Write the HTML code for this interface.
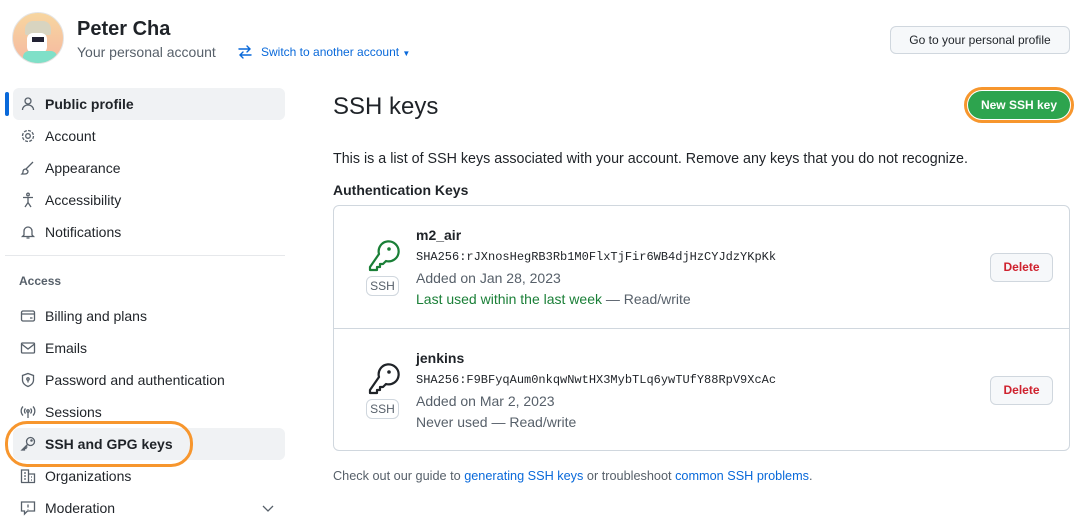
<!DOCTYPE html>
<html><head><meta charset="utf-8"><style>
*{margin:0;padding:0;box-sizing:border-box}
body{width:1083px;height:530px;overflow:hidden;background:#fff;font-family:"Liberation Sans",sans-serif;color:#1f2328;position:relative}
.a{position:absolute;white-space:nowrap}
.nav{position:absolute;left:45px;font-size:14px;color:#1f2328;line-height:20px}
.ic{position:absolute;left:20px;width:16px;height:16px}
.mono{font-family:"Liberation Mono",monospace;font-size:12px}
.btn{position:absolute;border:1px solid #d0d7de;border-radius:6px;background:#f6f8fa;font-size:12px;text-align:center}
.del{color:#cf222e;font-weight:600}
.badge{position:absolute;border:1px solid #d0d7de;border-radius:6px;font-size:12px;color:#57606a;width:33px;height:20px;line-height:18px;text-align:center}
</style></head><body>
<div class="a" style="left:12px;top:12px;width:52px;height:52px;border-radius:50%;background:linear-gradient(#f7d6a0,#f6b8a0);overflow:hidden;border:1px solid #e5e5e5">
<div style="position:absolute;left:12px;top:8px;width:26px;height:14px;background:#d8d4c0;border-radius:8px 8px 2px 2px"></div>
<div style="position:absolute;left:14px;top:20px;width:20px;height:20px;background:#fff;border-radius:6px"></div>
<div style="position:absolute;left:19px;top:24px;width:12px;height:5px;background:#223"></div>
<div style="position:absolute;left:10px;top:38px;width:34px;height:16px;background:#7fe0c8;border-radius:6px"></div>
</div>
<div class="a" style="left:77px;top:18px;font-size:20px;font-weight:600">Peter Cha</div>
<div class="a" style="left:77px;top:44px;font-size:14px;color:#57606a">Your personal account</div>
<svg class="a" style="left:237px;top:44px" width="16" height="16" viewBox="0 0 16 16" fill="none" stroke="#0969da" stroke-width="1.4" stroke-linecap="round"><path d="M2 5h11M10 2l3 3-3 3M14 11H3M6 8l-3 3 3 3"/></svg>
<div class="a" style="left:261px;top:45px;font-size:12px;color:#0969da">Switch to another account <span style="font-size:8px">▼</span></div>
<div class="btn" style="left:890px;top:26px;width:180px;height:28px;line-height:26px;font-size:12px">Go to your personal profile</div>

<div class="a" style="left:13px;top:88px;width:272px;height:32px;background:#f0f2f4;border-radius:6px"></div>
<div class="a" style="left:5px;top:92px;width:4px;height:24px;background:#0969da;border-radius:3px"></div>
<div class="a" style="left:13px;top:428px;width:272px;height:32px;background:#f0f2f4;border-radius:6px"></div>
<svg class="ic" style="top:96px" viewBox="0 0 16 16" fill="none" stroke="#57606a" stroke-width="1.3"><circle cx="8" cy="5" r="3"/><path d="M2.5 14c0-3 2.5-5 5.5-5s5.5 2 5.5 5"/></svg>
<div class="nav" style="top:94px;font-weight:600">Public profile</div>
<svg class="ic" style="top:128px" viewBox="0 0 16 16" fill="none" stroke="#57606a" stroke-width="1.3"><circle cx="8" cy="8" r="2.3"/><circle cx="8" cy="8" r="5.5" stroke-dasharray="3 1.3"/></svg>
<div class="nav" style="top:126px">Account</div>
<svg class="ic" style="top:160px" viewBox="0 0 16 16" fill="none" stroke="#57606a" stroke-width="1.3"><path d="M13 2L6 9M6 9c-2 0-3 1-3 3 0 1-1 2-1 2h3c2 0 3-1 3-3z"/></svg>
<div class="nav" style="top:158px">Appearance</div>
<svg class="ic" style="top:192px" viewBox="0 0 16 16" fill="none" stroke="#57606a" stroke-width="1.3"><circle cx="8" cy="2.5" r="1.3"/><path d="M3 5.5h10M8 5.5v5M5 15l3-4.5 3 4.5"/></svg>
<div class="nav" style="top:190px">Accessibility</div>
<svg class="ic" style="top:224px" viewBox="0 0 16 16" fill="none" stroke="#57606a" stroke-width="1.3"><path d="M4 11V7a4 4 0 018 0v4l1.5 1.5h-11zM6.5 14h3"/></svg>
<div class="nav" style="top:222px">Notifications</div>
<div class="a" style="left:5px;top:255px;width:280px;height:1px;background:#e6e8eb"></div>
<div class="a" style="left:19px;top:274px;font-size:12px;color:#57606a;font-weight:600">Access</div>
<svg class="ic" style="top:308px" viewBox="0 0 16 16" fill="none" stroke="#57606a" stroke-width="1.3"><rect x="1.5" y="3" width="13" height="10" rx="1.5"/><path d="M1.5 6h13M10 10h2.5"/></svg>
<div class="nav" style="top:306px">Billing and plans</div>
<svg class="ic" style="top:340px" viewBox="0 0 16 16" fill="none" stroke="#57606a" stroke-width="1.3"><rect x="1.5" y="3" width="13" height="10" rx="1"/><path d="M1.5 4l6.5 5 6.5-5"/></svg>
<div class="nav" style="top:338px">Emails</div>
<svg class="ic" style="top:372px" viewBox="0 0 16 16" fill="none" stroke="#57606a" stroke-width="1.3"><path d="M8 1.5l5.5 2v4.5c0 3.5-3 5.5-5.5 6.5-2.5-1-5.5-3-5.5-6.5V3.5z"/><circle cx="8" cy="7" r="1.2"/><path d="M8 8v2.5"/></svg>
<div class="nav" style="top:370px">Password and authentication</div>
<svg class="ic" style="top:404px" viewBox="0 0 16 16" fill="none" stroke="#57606a" stroke-width="1.3"><circle cx="8" cy="7" r="1.2"/><path d="M8 8v6M5.5 4.5a3.5 3.5 0 000 5M10.5 4.5a3.5 3.5 0 010 5M3 2.5a6.5 6.5 0 000 9M13 2.5a6.5 6.5 0 010 9"/></svg>
<div class="nav" style="top:402px">Sessions</div>
<svg class="ic" style="top:436px" viewBox="0 0 16 16" fill="none" stroke="#57606a" stroke-width="1.3"><circle cx="10.5" cy="5.5" r="4"/><path d="M7.5 8.5L2 14h2.5v-1.5H6v-1.5h1.5"/><circle cx="11.5" cy="4.5" r=".6" fill="#57606a"/></svg>
<div class="nav" style="top:434px;font-weight:600">SSH and GPG keys</div>
<div class="a" style="left:5px;top:421px;width:188px;height:46px;border:3px solid #f7962d;border-radius:22px"></div>
<svg class="ic" style="top:468px" viewBox="0 0 16 16" fill="none" stroke="#57606a" stroke-width="1.3"><path d="M1.5 14.5V2h7v12.5M8.5 6h6v8.5M1 14.5h14M4 5h2M4 8h2M4 11h2M11 9h1M11 12h1"/></svg>
<div class="nav" style="top:466px">Organizations</div>
<svg class="ic" style="top:500px" viewBox="0 0 16 16" fill="none" stroke="#57606a" stroke-width="1.3"><path d="M1.5 2h13v9h-7l-3 3v-3h-3z"/><path d="M8 4.5v3M8 9v.5"/></svg>
<div class="nav" style="top:498px">Moderation</div>
<svg class="a" style="left:261px;top:503px" width="14" height="10" viewBox="0 0 14 10" fill="none" stroke="#57606a" stroke-width="1.3"><path d="M2 3l5 5 5-5"/></svg>

<div class="a" style="left:333px;top:93px;font-size:24px;font-weight:400">SSH keys</div>
<div class="a" style="left:964px;top:87px;width:110px;height:36px;border:3px solid #f7962d;border-radius:18px"></div>
<div class="a" style="left:968px;top:91px;width:102px;height:28px;background:#2da44e;border-radius:14px;color:#fff;font-size:12px;font-weight:600;text-align:center;line-height:28px">New SSH key</div>
<div class="a" style="left:333px;top:151px;font-size:14.3px">This is a list of SSH keys associated with your account. Remove any keys that you do not recognize.</div>
<div class="a" style="left:333px;top:182px;font-size:14px;font-weight:600">Authentication Keys</div>
<div class="a" style="left:333px;top:205px;width:737px;height:246px;border:1px solid #d0d7de;border-radius:6px"></div>
<div class="a" style="left:334px;top:328px;width:735px;height:1px;background:#d0d7de"></div>

<svg class="a" style="left:365px;top:238px" width="36" height="36" viewBox="0 0 36 36" fill="none" stroke="#1a7f37" stroke-width="2.2" stroke-linejoin="round"><path d="M14 16a10 10 0 1 1 7 7l-3 3h-3v3h-3v3H5v-3z"/><circle cx="24" cy="11" r="1.8" fill="#1a7f37" stroke="none"/></svg>
<div class="badge" style="left:366px;top:276px">SSH</div>
<div class="a" style="left:416px;top:227px;font-size:14px;font-weight:600">m2_air</div>
<div class="a mono" style="left:416px;top:250px">SHA256:rJXnosHegRB3Rb1M0FlxTjFir6WB4djHzCYJdzYKpKk</div>
<div class="a" style="left:416px;top:270px;font-size:14px;color:#57606a">Added on Jan 28, 2023</div>
<div class="a" style="left:416px;top:291px;font-size:14px;color:#57606a"><span style="color:#1a7f37">Last used within the last week</span> — Read/write</div>
<div class="btn del" style="left:990px;top:253px;width:63px;height:29px;line-height:27px">Delete</div>

<svg class="a" style="left:365px;top:361px" width="36" height="36" viewBox="0 0 36 36" fill="none" stroke="#1f2328" stroke-width="2.2" stroke-linejoin="round"><path d="M14 16a10 10 0 1 1 7 7l-3 3h-3v3h-3v3H5v-3z"/><circle cx="24" cy="11" r="1.8" fill="#1f2328" stroke="none"/></svg>
<div class="badge" style="left:366px;top:399px">SSH</div>
<div class="a" style="left:416px;top:350px;font-size:14px;font-weight:600">jenkins</div>
<div class="a mono" style="left:416px;top:373px">SHA256:F9BFyqAum0nkqwNwtHX3MybTLq6ywTUfY88RpV9XcAc</div>
<div class="a" style="left:416px;top:393px;font-size:14px;color:#57606a">Added on Mar 2, 2023</div>
<div class="a" style="left:416px;top:414px;font-size:14px;color:#57606a">Never used — Read/write</div>
<div class="btn del" style="left:990px;top:376px;width:63px;height:29px;line-height:27px">Delete</div>

<div class="a" style="left:333px;top:469px;font-size:12.7px;color:#57606a">Check out our guide to <span style="color:#0969da">generating SSH keys</span> or troubleshoot <span style="color:#0969da">common SSH problems</span>.</div>
</body></html>
